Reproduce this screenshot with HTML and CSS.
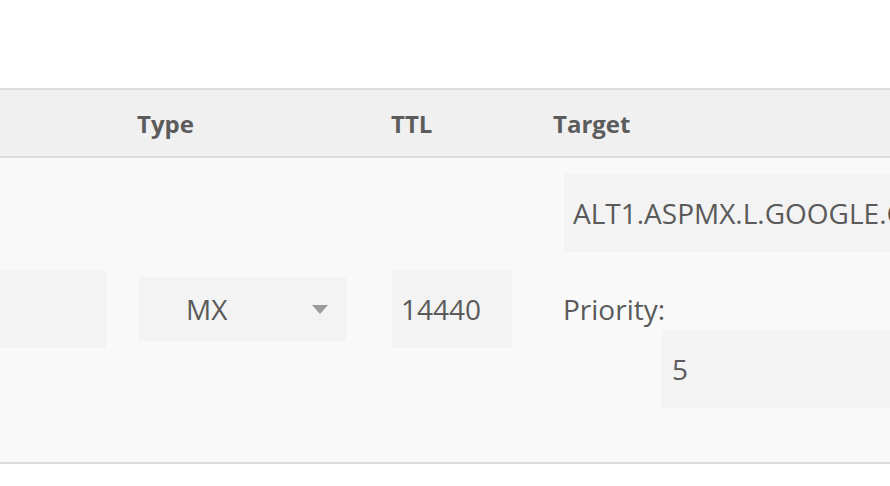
FILE: index.html
```html
<!DOCTYPE html>
<html>
<head>
<meta charset="utf-8">
<link rel="stylesheet" href="styles.css">
</head>
<body>
<div class="page">
  <div class="table">
    <div class="row head">
      <div class="cell"></div>
      <div class="cell">Type</div>
      <div class="cell">TTL</div>
      <div class="cell">Target</div>
    </div>
    <div class="row body">
      <div class="cell mid"><input class="field name" type="text" value=""></div>
      <div class="cell mid">
        <div class="select">
          <span class="select-value">MX</span>
          <svg class="caret" width="16" height="9" viewBox="0 0 16 9"><path d="M0 0 H16 L8 9 Z" fill="#9a9a9a"/></svg>
        </div>
      </div>
      <div class="cell mid"><input class="field ttl" type="text" value="14440"></div>
      <div class="cell target">
        <input class="field wide" type="text" value="ALT1.ASPMX.L.GOOGLE.COM.">
        <label class="prio-label">Priority:</label>
        <input class="field prio" type="text" value="5">
      </div>
    </div>
  </div>
</div>
</body>
</html>
```

FILE: styles.css
```css
html, body {
  margin: 0;
  padding: 0;
  background: #ffffff;
  overflow: hidden;
}

.page {
  width: 890px;
  height: 486px;
  overflow: hidden;
  padding-top: 88px;
  box-sizing: border-box;
  font-family: "Open Sans", "Liberation Sans", sans-serif;
  color: #5a5a5a;
}

.table {
  width: 890px;
}

.row {
  display: grid;
  grid-template-columns: 137px 254px 162px 1fr;
  align-items: center;
}

.head {
  height: 66px;
  background: #f0f0f0;
  border-top: 2px solid #dddddd;
  border-bottom: 2px solid #dddddd;
  font-size: 24px;
  font-weight: 700;
  color: #5c5c5c;
}

.body {
  background: #f9f9f9;
  border-bottom: 2px solid #dddddd;
  font-size: 28px;
}

.cell {
  min-width: 0;
  overflow: hidden;
}

.mid {
  margin-bottom: 2px;
}

.field {
  display: block;
  box-sizing: border-box;
  border: none;
  outline: none;
  margin: 0;
  background: #f3f3f3;
  font-family: "Open Sans", "Liberation Sans", sans-serif;
  font-size: 28px;
  color: #5a5a5a;
  height: 78px;
  padding: 0 0 0 10px;
}

.name { width: 106px; }
.ttl { width: 120px; padding-left: 9px; margin-left: 1px; }

.select {
  box-sizing: border-box;
  width: 208px;
  height: 64px;
  margin-left: 1px;
  background: #f3f3f3;
  display: flex;
  align-items: center;
  justify-content: space-between;
  padding: 0 18px 0 48px;
}

.select-value {
  line-height: 1;
}

.caret {
  display: block;
  filter: blur(0.4px);
}

.target {
  padding: 16px 0 54px 11px;
  display: flex;
  flex-direction: column;
}

.wide {
  width: 420px;
  padding-left: 9px;
}

.prio-label {
  display: block;
  line-height: 40px;
  margin-top: 37px;
  margin-bottom: 1px;
  margin-left: -1px;
}

.prio {
  width: 300px;
  margin-left: 98px;
}
```
